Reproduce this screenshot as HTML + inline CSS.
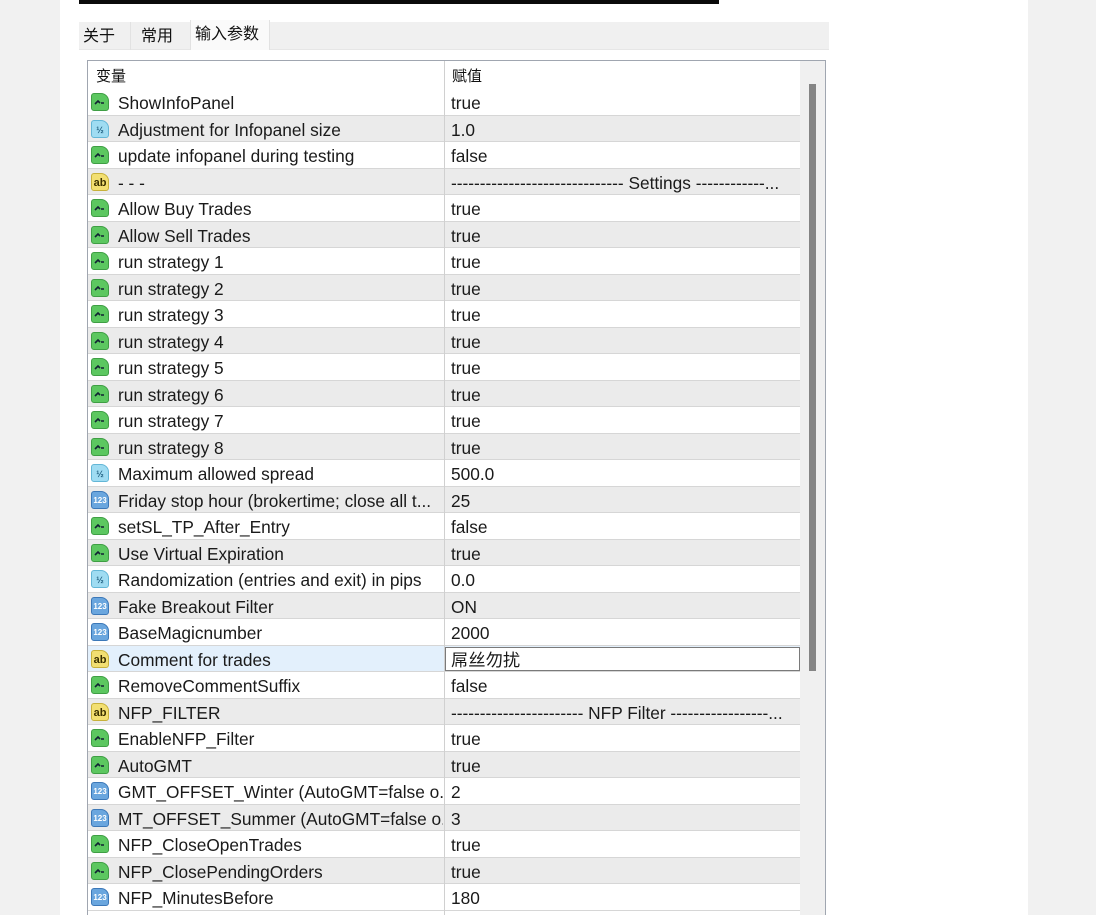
<!DOCTYPE html>
<html style="width:1096px;height:915px;overflow:hidden"><head><meta charset="utf-8"><style>
*{margin:0;padding:0;box-sizing:border-box}
body{width:1096px;height:915px;overflow:hidden;background:#f1f1f1;font-family:"Liberation Sans","Noto Sans CJK SC",sans-serif;position:relative}
.main{position:absolute;left:60px;top:0;width:968px;height:915px;background:#fff}
.bar{position:absolute;left:79px;top:0;width:640px;height:4px;background:#0a0a0a}
.tabs{position:absolute;left:79px;top:22px;width:750px;height:28px;background:#f0f0f0;border-bottom:1px solid #e6e6e6}
.tab{position:absolute;top:0;height:28px;font-size:16px;line-height:30px;color:#111;padding-left:4px}
.box{position:absolute;left:87px;top:60px;width:739px;height:870px;border:1px solid #a0a6b0;background:#fff}
.hdr{position:absolute;left:88px;top:61px;width:712px;height:28px;font-size:15px;line-height:32px;color:#111}
.row{position:absolute;left:88px;width:712px;height:26.5px;border-bottom:1px solid #d6d6d6;font-size:17.3px;line-height:29px;color:#1a1a1a;white-space:nowrap}
.g{background:#ebebeb}
.sel{background:#e3f0fc}
.n{position:absolute;left:30px;top:0;width:325px;overflow:hidden}
.v{position:absolute;left:362px;top:0;width:350px;height:26px;padding-left:1px;overflow:hidden}
.sep{position:absolute;left:444px;top:61px;width:1px;height:860px;background:#d0d0d0}
.ic{position:absolute;left:3px;top:4px;width:18px;height:18px;border-radius:3px 8px 3px 3px;font-size:9px;line-height:18px;text-align:center;font-weight:bold}
.i-g{background:#5cc760;border:1px solid #3f9e44}
.i-h{background:#9fdcf2;border:1px solid #63b6d6;color:#1f5f80}
.i-n{background:#6aa6de;border:1px solid #3c78b8;color:#fff;font-size:8px}
.i-a{background:#f2df72;border:1px solid #c7b13a;color:#3a3000;font-size:11px}
.scroll{position:absolute;left:800px;top:61px;width:25px;height:860px;background:#f0f0f0}
.thumb{position:absolute;left:809px;top:84px;width:7px;height:587px;background:#858585}
.edit{position:absolute;top:1px;height:24px;border:1px solid #7a7a7a;background:#fff}
</style></head><body>
<div class="main"></div>
<div class="bar"></div>
<div class="tabs">
<div class="tab" style="left:0;width:52px;border-right:1px solid #e2e2e2">关于</div>
<div class="tab" style="left:58px;width:52px;">常用</div>
<div class="tab" style="left:111px;width:80px;background:#fafafa;border-left:1px solid #e2e2e2;border-right:1px solid #e2e2e2;top:-2px;height:30px">输入参数</div>
</div>
<div class="box"></div>
<div class="hdr"><span style="position:absolute;left:8px">变量</span><span style="position:absolute;left:364px">赋值</span></div>
<div id="rows"></div>
<div class="sep"></div>
<div class="scroll"></div>
<div class="thumb"></div>
<script>
var R=[["g","ShowInfoPanel","true"],["h","Adjustment for Infopanel size","1.0"],["g","update infopanel during testing","false"],["a","- - -","------------------------------ Settings ------------..."],["g","Allow Buy Trades","true"],["g","Allow Sell Trades","true"],["g","run strategy 1","true"],["g","run strategy 2","true"],["g","run strategy 3","true"],["g","run strategy 4","true"],["g","run strategy 5","true"],["g","run strategy 6","true"],["g","run strategy 7","true"],["g","run strategy 8","true"],["h","Maximum allowed spread","500.0"],["n","Friday stop hour (brokertime; close all t...","25"],["g","setSL_TP_After_Entry","false"],["g","Use Virtual Expiration","true"],["h","Randomization (entries and exit) in pips","0.0"],["n","Fake Breakout Filter","ON"],["n","BaseMagicnumber","2000"],["a","Comment for trades","屌丝勿扰"],["g","RemoveCommentSuffix","false"],["a","NFP_FILTER","----------------------- NFP Filter -----------------..."],["g","EnableNFP_Filter","true"],["g","AutoGMT","true"],["n","GMT_OFFSET_Winter (AutoGMT=false o...","2"],["n","MT_OFFSET_Summer (AutoGMT=false o...","3"],["g","NFP_CloseOpenTrades","true"],["g","NFP_ClosePendingOrders","true"],["n","NFP_MinutesBefore","180"]];
var sym={g:'<svg width="16" height="16" viewBox="0 0 16 16"><path d="M3 10 L6 7 L8 9 M9 9 L12 9" stroke="#123" stroke-width="1.6" fill="none"/></svg>',h:'½',n:'123',a:'ab'};
var h='';R.forEach(function(r,i){var t=89+i*26.5;var cls=(i==21)?'sel':(i%2?'g':'');
h+='<div class="row '+cls+'" style="top:'+t+'px"><div class="ic i-'+r[0]+'">'+sym[r[0]]+'</div><span class="n">'+r[1]+'</span>'+(i==21?'<div class="edit" style="left:357px;width:355px"></div>':'')+'<span class="v">'+r[2]+'</span></div>';});
document.getElementById('rows').innerHTML=h;
</script>
</body></html>
